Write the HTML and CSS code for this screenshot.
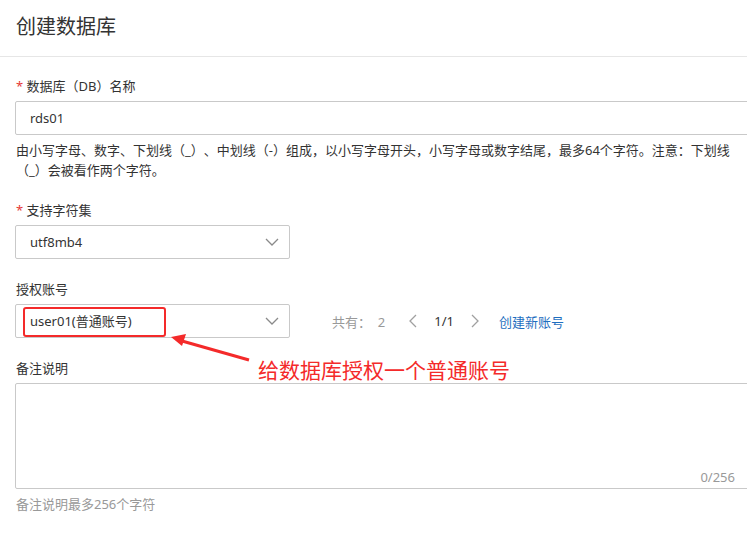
FILE: index.html
```html
<!DOCTYPE html>
<html lang="zh-CN">
<head>
<meta charset="utf-8">
<title>创建数据库</title>
<link rel="stylesheet" href="styles.css">
</head>
<body>
<div class="page">
  <header class="header"><h1 class="title">创建数据库</h1></header>
  <form class="form">
    <div class="field">
      <label class="label"><span class="req">*</span> 数据库（DB）名称</label>
      <div class="input wide"><span class="value">rds01</span></div>
      <p class="help">由小写字母、数字、下划线（_）、中划线（-）组成，以小写字母开头，小写字母或数字结尾，最多64个字符。注意：下划线（_）会被看作两个字符。</p>
    </div>
    <div class="field">
      <label class="label"><span class="req">*</span> 支持字符集</label>
      <div class="input select"><span class="value">utf8mb4</span>
        <svg class="chev" width="14" height="8" viewBox="0 0 14 8"><path d="M1 1 L7 7 L13 1" fill="none" stroke="#8a8a8a" stroke-width="1.3"/></svg>
      </div>
    </div>
    <div class="field">
      <label class="label">授权账号</label>
      <div class="row">
        <div class="input select"><span class="value">user01(普通账号)</span>
          <svg class="chev" width="14" height="8" viewBox="0 0 14 8"><path d="M1 1 L7 7 L13 1" fill="none" stroke="#8a8a8a" stroke-width="1.3"/></svg>
        </div>
        <div class="pager">
          <span class="total">共有：&nbsp;&nbsp;2</span>
          <svg class="arrow" width="8" height="14" viewBox="0 0 8 14"><path d="M7 1 L1 7 L7 13" fill="none" stroke="#a0a0a0" stroke-width="1.3"/></svg>
          <span class="pages">1/1</span>
          <svg class="arrow" width="8" height="14" viewBox="0 0 8 14"><path d="M1 1 L7 7 L1 13" fill="none" stroke="#a0a0a0" stroke-width="1.3"/></svg>
          <a class="link">创建新账号</a>
        </div>
      </div>
    </div>
    <div class="field">
      <label class="label">备注说明</label>
      <div class="input textarea wide"><span class="count">0/256</span></div>
      <p class="help muted">备注说明最多256个字符</p>
    </div>
  </form>
  <div class="mark-box"></div>
  <svg class="mark-arrow" width="747" height="541" viewBox="0 0 747 541">
    <line x1="249" y1="360" x2="182" y2="341" stroke="#f42a2a" stroke-width="3"/>
    <polygon points="171,337 186,334 182,346" fill="#f42a2a"/>
  </svg>
  <div class="mark-text">给数据库授权一个普通账号</div>
</div>
</body>
</html>
```
FILE: styles.css
```css
html, body {
  margin: 0;
  padding: 0;
  background: #fff;
  overflow: hidden;
}
body {
  font-family: "Noto Sans", "Noto Sans CJK SC", sans-serif;
  color: #333;
  font-size: 13px;
  width: 747px;
  height: 541px;
  text-spacing-trim: space-all;
}
.page {
  position: relative;
  width: 747px;
  height: 541px;
  overflow: hidden;
}
.header {
  height: 57px;
  border-bottom: 1px solid #e6e6e6;
  padding-left: 16px;
  box-sizing: border-box;
  display: flex;
  align-items: center;
}
.title {
  margin: 0;
  margin-top: -3px;
  font-size: 20px;
  font-weight: normal;
  color: #333;
  line-height: 28px;
}
.form {
  padding: 19px 0 0 15px;
  width: 760px;
  display: flex;
  flex-direction: column;
  gap: 20px;
}
.field {
  display: flex;
  flex-direction: column;
}
.label {
  line-height: 20px;
  height: 20px;
  margin-bottom: 5px;
  padding-left: 1px;
  color: #333;
}
.req {
  color: #e53935;
}
.input {
  box-sizing: border-box;
  border: 1px solid #c9c9c9;
  border-radius: 2px;
  height: 34px;
  display: flex;
  align-items: center;
  padding-left: 14px;
  background: #fff;
}
.wide {
  width: 760px;
}
.select {
  width: 275px;
  justify-content: space-between;
  padding-right: 10px;
}
.value {
  color: #333;
  line-height: 20px;
}
.chev {
  display: block;
}
.help {
  margin: 5px 0 0 1px;
  line-height: 20px;
  width: 735px;
  color: #333;
}
.muted {
  color: #999;
}
.row {
  display: flex;
  align-items: center;
}
.pager {
  display: flex;
  align-items: center;
  margin-left: 42px;
  color: #999;
}
.total {
  margin-right: 24px;
}
.arrow {
  display: block;
}
.pages {
  color: #333;
  margin: 0 17px 0 17px;
}
.link {
  color: #1f6fc0;
  margin-left: 20px;
}
.textarea {
  height: 106px;
  position: relative;
}
.count {
  position: absolute;
  right: 39px;
  bottom: 1px;
  color: #999;
  line-height: 20px;
}
.mark-box {
  position: absolute;
  left: 23px;
  top: 307px;
  width: 143px;
  height: 30px;
  box-sizing: border-box;
  border: 2px solid #f42a2a;
  border-radius: 3px;
}
.mark-arrow {
  position: absolute;
  left: 0;
  top: 0;
  pointer-events: none;
}
.mark-text {
  position: absolute;
  left: 258px;
  top: 356px;
  font-size: 21px;
  line-height: 28px;
  color: #f42a2a;
  white-space: nowrap;
}
```
